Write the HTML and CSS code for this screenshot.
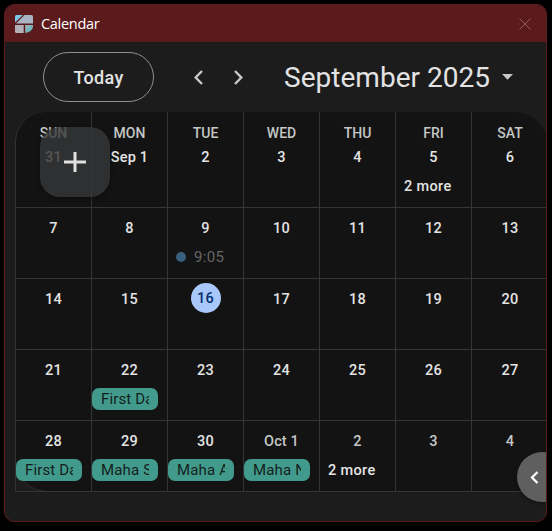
FILE: index.html
```
<!DOCTYPE html>
<html lang="en">
<head>
<meta charset="utf-8">
<title>Calendar</title>
<link rel="stylesheet" href="styles.css">
</head>
<body>
<div class="window">
  <header class="titlebar">
    <svg class="logo" width="18" height="18" viewBox="0 0 18 18">
      <defs>
        <linearGradient id="a" x1="0" y1="0" x2="1" y2="1"><stop offset="0" stop-color="#78cdf0"/><stop offset="1" stop-color="#88b5d2"/></linearGradient>
        <linearGradient id="b" x1="0" y1="0" x2="1" y2="1"><stop offset="0" stop-color="#a7b4bb"/><stop offset="1" stop-color="#4bb4b5"/></linearGradient>
      </defs>
      <path d="M1.500 0H8L0 7.500V1.500Q0 0 1.500 0Z" fill="url(#a)"/>
      <path d="M9.500 0H16.500Q18 0 18 1.500V8.500H1Z" fill="#a9b4c4"/>
      <path d="M0 10H8.700V18H1.500Q0 18 0 16.500Z" fill="#b3b1b8"/>
      <path d="M10.200 10H18V12Q17 17 10.200 18Z" fill="url(#b)"/>
    </svg>
    <span class="app-name">Calendar</span>
    <svg class="close" width="12" height="12" viewBox="0 0 12 12"><path d="M.5.5L11.500 11.500M11.500.5L.5 11.500" stroke="#8f5c5e" fill="none"/></svg>
  </header>
  <nav class="toolbar">
    <button class="today">Today</button>
    <svg class="prev" width="9" height="15" viewBox="0 0 9 15"><path d="M8 1L1.700 7.500L8 14" fill="none" stroke="#c8c8c8" stroke-width="2.400"/></svg>
    <svg class="next" width="9" height="15" viewBox="0 0 9 15"><path d="M1 1L7.300 7.500L1 14" fill="none" stroke="#c8c8c8" stroke-width="2.400"/></svg>
    <h1 class="month">September 2025</h1>
    <svg class="caret" width="11" height="6" viewBox="0 0 11 6"><path d="M0 0H11L5.500 5.800Z" fill="#c8c8c8"/></svg>
  </nav>
  <main class="grid">
    <div class="cell"><span class="weekday">SUN</span><span class="day muted">31</span></div>
    <div class="cell"><span class="weekday">MON</span><span class="day">Sep 1</span></div>
    <div class="cell"><span class="weekday">TUE</span><span class="day">2</span></div>
    <div class="cell"><span class="weekday">WED</span><span class="day">3</span></div>
    <div class="cell"><span class="weekday">THU</span><span class="day">4</span></div>
    <div class="cell"><span class="weekday">FRI</span><span class="day">5</span><span class="more">2 more</span></div>
    <div class="cell"><span class="weekday">SAT</span><span class="day">6</span></div>

    <div class="cell"><span class="day">7</span></div>
    <div class="cell"><span class="day">8</span></div>
    <div class="cell"><span class="day">9</span><span class="timed"><i class="dot"></i>9:05</span></div>
    <div class="cell"><span class="day">10</span></div>
    <div class="cell"><span class="day">11</span></div>
    <div class="cell"><span class="day">12</span></div>
    <div class="cell"><span class="day">13</span></div>

    <div class="cell"><span class="day">14</span></div>
    <div class="cell"><span class="day">15</span></div>
    <div class="cell"><span class="day current">16</span></div>
    <div class="cell"><span class="day">17</span></div>
    <div class="cell"><span class="day">18</span></div>
    <div class="cell"><span class="day">19</span></div>
    <div class="cell"><span class="day">20</span></div>

    <div class="cell"><span class="day">21</span></div>
    <div class="cell"><span class="day">22</span><span class="event"><span class="label">First Da</span></span></div>
    <div class="cell"><span class="day">23</span></div>
    <div class="cell"><span class="day">24</span></div>
    <div class="cell"><span class="day">25</span></div>
    <div class="cell"><span class="day">26</span></div>
    <div class="cell"><span class="day">27</span></div>

    <div class="cell"><span class="day">28</span><span class="event"><span class="label">First Da</span></span></div>
    <div class="cell"><span class="day">29</span><span class="event"><span class="label">Maha S</span></span></div>
    <div class="cell"><span class="day">30</span><span class="event"><span class="label">Maha A</span></span></div>
    <div class="cell"><span class="day muted">Oct 1</span><span class="event"><span class="label">Maha N</span></span></div>
    <div class="cell"><span class="day muted">2</span><span class="more">2 more</span></div>
    <div class="cell"><span class="day muted">3</span></div>
    <div class="cell"><span class="day muted">4</span></div>
  </main>
  <button class="create" aria-label="Create"><svg width="22" height="22" viewBox="0 0 22 22"><path d="M11 1V21M0 11H22" stroke="#e0e0e0" stroke-width="3"/></svg></button>
  <button class="panel" aria-label="Show side panel"><svg width="9" height="13" viewBox="0 0 9 13"><path d="M7.500 1L2 6.500L7.500 12" fill="none" stroke="#fff" stroke-width="2.200"/></svg></button>
</div>
</body>
</html>
```
FILE: styles.css
```
* { box-sizing: border-box; }
body {
  margin: 0;
  padding: 4px;
  height: 531px;
  background: #000;
  overflow: hidden;
  font-family: Roboto, "Liberation Sans", sans-serif;
}
button { font: inherit; padding: 0; }
svg { display: block; flex: none; }
.window {
  position: relative;
  width: 543px;
  height: 518px;
  border: 1px solid #5b1b1d;
  border-radius: 10px;
  background: #1c1c1c;
  overflow: hidden;
}
.titlebar {
  display: flex;
  align-items: center;
  height: 37px;
  padding: 0 15px 0 10px;
  background: #5b1b1d;
}
.app-name {
  margin-left: 8px;
  color: #fff;
  font: 14.500px/20px "Open Sans", sans-serif;
  letter-spacing: -.3px;
}
.close { margin-left: auto; }
.toolbar {
  display: flex;
  align-items: center;
  height: 70px;
  padding-left: 38px;
}
.today {
  width: 111px;
  height: 50px;
  border: 1px solid #8e918f;
  border-radius: 25px;
  background: none;
  color: #e3e3e3;
  font-size: 18px;
  font-weight: 500;
  letter-spacing: .35px;
}
.prev { margin-left: 40px; }
.next { margin-left: 31px; }
.month {
  width: 206px;
  margin: 2px 0 0 41px;
  color: #e3e3e3;
  font-size: 28px;
  line-height: 36px;
  font-weight: 400;
  letter-spacing: .03px;
  white-space: nowrap;
}
.caret { margin-left: 12px; }
.grid {
  display: grid;
  grid-template-columns: repeat(7, 76px);
  grid-template-rows: 96px repeat(4, 71px);
  width: 533px;
  margin-left: 10px;
  border-left: 1px solid #333537;
  border-top-left-radius: 30px;
  border-top-right-radius: 34px;
  background: #131313;
  overflow: hidden;
}
.cell {
  display: flex;
  flex-direction: column;
  align-items: center;
  min-width: 0;
  padding-top: 10px;
  border-right: 1px solid #333537;
  border-bottom: 1px solid #333537;
}
.cell:nth-child(7n) { border-right: 0; }
/* rounded lower-left corner of the grid surface */
.cell:nth-child(29) {
  background: radial-gradient(circle at 30px 0, transparent 29px, #292a2b 30px, #1c1c1c 31px) 0 100% / 30px 30px no-repeat;
}
.weekday {
  height: 25px;
  color: #c4c7c5;
  font-size: 14px;
  line-height: 23px;
  font-weight: 500;
}
.day {
  height: 20px;
  color: #e3e3e3;
  font-size: 14.500px;
  line-height: 22px;
  font-weight: 500;
  letter-spacing: .15px;
  white-space: nowrap;
}
.muted { color: #c4c7c5; }
.current {
  width: 30px;
  height: 30px;
  margin-top: -6px;
  border-radius: 50%;
  background: #a8c7fa;
  color: #062e6f;
  line-height: 31px;
  text-align: center;
}
.more, .timed {
  align-self: flex-start;
  margin: 9px 0 0 8px;
  color: #e3e3e3;
  font-size: 14.500px;
  line-height: 22px;
  font-weight: 500;
  letter-spacing: .35px;
}
.timed {
  display: flex;
  align-items: center;
  margin-top: 8px;
  color: #666;
  font-size: 15px;
  font-weight: 400;
}
.dot {
  width: 10px;
  height: 10px;
  margin-right: 8px;
  border-radius: 50%;
  background: #3a6080;
}
.event {
  align-self: flex-start;
  width: 66px;
  height: 22px;
  margin-top: 8px;
  padding: 0 9px;
  border-radius: 7px;
  background: #429a8c;
}
.label {
  display: block;
  overflow: hidden;
  color: #131f1c;
  font-size: 15px;
  line-height: 22px;
  letter-spacing: .15px;
  white-space: nowrap;
}
.create {
  position: absolute;
  left: 35px;
  top: 122px;
  display: grid;
  place-items: center;
  width: 70px;
  height: 70px;
  border: 0;
  border-radius: 20px;
  background: rgba(55, 56, 58, .8);
  box-shadow: 0 2px 5px rgba(0, 0, 0, .35);
}
.panel {
  position: absolute;
  left: 512px;
  top: 447px;
  display: flex;
  align-items: center;
  width: 50px;
  height: 50px;
  padding-left: 13px;
  border: 0;
  border-radius: 50%;
  background: #5f5f5f;
  box-shadow: 0 1px 4px rgba(0, 0, 0, .4);
}
```
